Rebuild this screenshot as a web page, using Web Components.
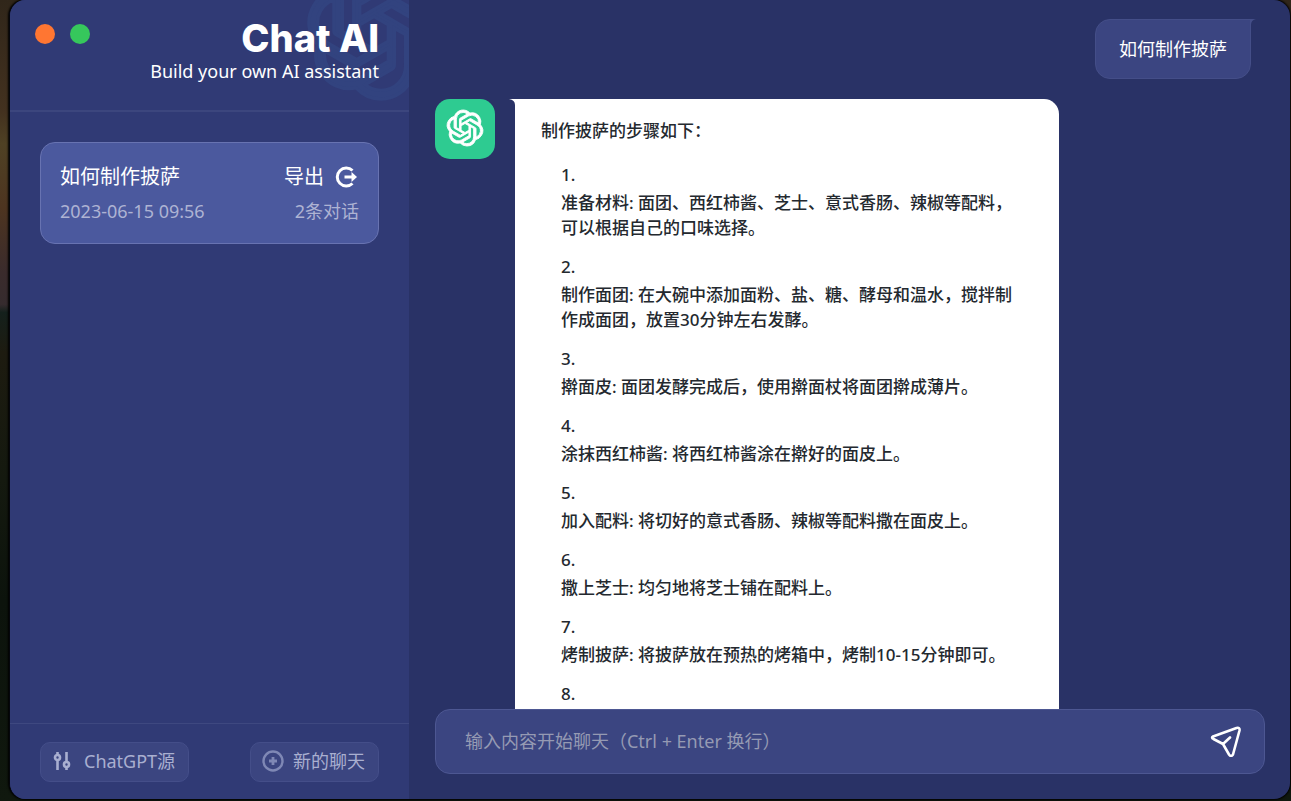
<!DOCTYPE html>
<html lang="zh-CN">
<head>
<meta charset="utf-8">
<title>Chat AI</title>
<style>
html, body { height: 100%; margin: 0; }
body {
  font-family: "Noto Sans", "Noto Sans CJK SC", sans-serif;
  color: #fff;
  overflow: hidden;
  background: linear-gradient(180deg, #30261a 0, #43311f 14%, #4f4124 18%, #4d3420 26%, #3a2b2c 34%, #352b2e 38%, #14201c 39%, #1d1b10 44%, #14190f 60%, #0c130c 75%, #10180e 100%);
}
</style>
</head>
<body>
<chat-window>
  <chat-sidebar slot="sidebar">
    <chat-session slot="sessions" when="2023-06-15 09:56" count="2条对话">如何制作披萨</chat-session>
    <tool-button slot="tools" icon="sliders">ChatGPT源</tool-button>
    <tool-button slot="tools" icon="plus">新的聊天</tool-button>
  </chat-sidebar>
  <user-message>如何制作披萨</user-message>
  <bot-message>
    <span>制作披萨的步骤如下：</span>
    <recipe-step slot="steps" n="1">准备材料: 面团、西红柿酱、芝士、意式香肠、辣椒等配料，可以根据自己的口味选择。</recipe-step>
    <recipe-step slot="steps" n="2">制作面团: 在大碗中添加面粉、盐、糖、酵母和温水，搅拌制作成面团，放置30分钟左右发酵。</recipe-step>
    <recipe-step slot="steps" n="3">擀面皮: 面团发酵完成后，使用擀面杖将面团擀成薄片。</recipe-step>
    <recipe-step slot="steps" n="4">涂抹西红柿酱: 将西红柿酱涂在擀好的面皮上。</recipe-step>
    <recipe-step slot="steps" n="5">加入配料: 将切好的意式香肠、辣椒等配料撒在面皮上。</recipe-step>
    <recipe-step slot="steps" n="6">撒上芝士: 均匀地将芝士铺在配料上。</recipe-step>
    <recipe-step slot="steps" n="7">烤制披萨: 将披萨放在预热的烤箱中，烤制10-15分钟即可。</recipe-step>
    <recipe-step slot="steps" n="8"></recipe-step>
  </bot-message>
  <chat-composer slot="composer"></chat-composer>
</chat-window>
<script>
const LOGO = '<path fill="currentColor" stroke="currentColor" stroke-width=".6" d="M22.2819 9.8211a5.9847 5.9847 0 0 0-.5157-4.9108 6.0462 6.0462 0 0 0-6.5098-2.9A6.0651 6.0651 0 0 0 4.9807 4.1818a5.9847 5.9847 0 0 0-3.9977 2.9 6.0462 6.0462 0 0 0 .7427 7.0966 5.98 5.98 0 0 0 .511 4.9107 6.051 6.051 0 0 0 6.5146 2.9001A5.9847 5.9847 0 0 0 13.2599 24a6.0557 6.0557 0 0 0 5.7718-4.2058 5.9894 5.9894 0 0 0 3.9977-2.9001 6.0557 6.0557 0 0 0-.7475-7.0729zm-9.022 12.6081a4.4755 4.4755 0 0 1-2.8764-1.0408l.1419-.0804 4.7783-2.7582a.7948.7948 0 0 0 .3927-.6813v-6.7369l2.02 1.1686a.071.071 0 0 1 .038.052v5.5826a4.504 4.504 0 0 1-4.4945 4.4944zm-9.6607-4.1254a4.4708 4.4708 0 0 1-.5346-3.0137l.142.0852 4.783 2.7582a.7712.7712 0 0 0 .7806 0l5.8428-3.3685v2.3324a.0804.0804 0 0 1-.0332.0615L9.74 19.9502a4.4992 4.4992 0 0 1-6.1408-1.6464zM2.3408 7.8956a4.485 4.485 0 0 1 2.3655-1.9728V11.6a.7664.7664 0 0 0 .3879.6765l5.8144 3.3543-2.0201 1.1685a.0757.0757 0 0 1-.071 0l-4.8303-2.7865A4.504 4.504 0 0 1 2.3408 7.872zm16.5963 3.8558L13.1038 8.364 15.1192 7.2a.0757.0757 0 0 1 .071 0l4.8303 2.7913a4.4944 4.4944 0 0 1-.6765 8.1042v-5.6772a.79.79 0 0 0-.407-.667zm2.0107-3.0231l-.142-.0852-4.7735-2.7818a.7759.7759 0 0 0-.7854 0L9.409 9.2297V6.8974a.0662.0662 0 0 1 .0284-.0615l4.8303-2.7866a4.4992 4.4992 0 0 1 6.6802 4.66zM8.3065 12.863l-2.02-1.1638a.0804.0804 0 0 1-.038-.0567V6.0742a4.4992 4.4992 0 0 1 7.3757-3.4537l-.142.0805L8.704 5.459a.7948.7948 0 0 0-.3927.6813zm1.0976-2.3654l2.602-1.4998 2.6069 1.4998v2.9994l-2.5974 1.4997-2.6067-1.4997Z"/>';

const define = (name, html, setup) => {
  const t = document.createElement('template');
  t.innerHTML = '<style>*{box-sizing:border-box}</style>' + html;
  customElements.define(name, class extends HTMLElement {
    connectedCallback() {
      if (this.shadowRoot) return;
      const root = this.attachShadow({ mode: 'open' });
      root.append(t.content.cloneNode(true));
      if (setup) setup(this, root);
    }
  });
};

define('chat-window', `
<style>
:host { display: block; height: 100%; box-sizing: border-box; padding: 0 1px 2px 9px; }
.frame { display: flex; height: 100%; border-left: 1px solid #05060c; border-radius: 16px; overflow: hidden; background: #293266; box-shadow: 0 0 2px 1px #000; }
main { flex: 1; min-width: 0; display: flex; flex-direction: column; padding: 0 25px 0 26px; }
.log { flex: 1; min-height: 0; overflow: hidden; padding: 19px 14px 0 0; display: flex; flex-direction: column; gap: 20px; }
.foot { padding-bottom: 25px; }
</style>
<div class="frame">
  <slot name="sidebar"></slot>
  <main>
    <div class="log"><slot></slot></div>
    <div class="foot"><slot name="composer"></slot></div>
  </main>
</div>`);

define('chat-sidebar', `
<style>
:host { display: flex; flex-direction: column; width: 399px; flex: none; background: #303a75; }
header { position: relative; height: 112px; overflow: hidden; border-bottom: 2px solid #3c467e; display: flex; justify-content: space-between; padding: 18px 30px 0 25px; }
.logo { position: absolute; right: -31px; top: -33px; width: 132px; height: 132px; color: #32437f; overflow: visible; }
.dots { display: flex; gap: 15px; padding-top: 6px; }
.dots button { width: 20px; height: 20px; border: 0; padding: 0; border-radius: 50%; background: #ff7632; }
.dots button + button { background: #36c75c; }
.brand { position: relative; text-align: right; }
h1 { margin: 0; font: 800 38px/40px Inter, sans-serif; }
p { margin: 0; font-size: 18px; line-height: 26px; }
.list { flex: 1; padding: 30px; }
footer { height: 76px; border-top: 1px solid #3e4880; padding: 18px 30px 0; display: flex; justify-content: space-between; align-items: flex-start; }
</style>
<header>
  <svg class="logo" viewBox="0 0 24 24" aria-hidden="true">${LOGO}</svg>
  <div class="dots"><button aria-label="关闭"></button><button aria-label="最大化"></button></div>
  <div class="brand"><h1>Chat AI</h1><p>Build your own AI assistant</p></div>
</header>
<div class="list"><slot name="sessions"></slot></div>
<footer><slot name="tools"></slot></footer>`);

define('chat-session', `
<style>
:host { display: block; border: 1px solid #6873b1; border-radius: 15px; background: #4b599e; padding: 18px 19px 13px; }
.row { display: flex; justify-content: space-between; align-items: center; }
.title { font-size: 20px; line-height: 32px; }
button { display: flex; align-items: center; gap: 11px; border: 0; padding: 0; background: none; color: inherit; font: inherit; font-size: 20px; line-height: 32px; }
.meta { font-size: 18px; line-height: 37px; color: #aeb3d3; }
svg { width: 24px; height: 24px; }
</style>
<div class="row"><span class="title"><slot></slot></span>
<button>导出<svg viewBox="0 0 24 24" fill="none" stroke="#fff" stroke-width="3"><path d="M17.500 5.500A9 9 0 1 0 17.500 18.500M9.500 12H18"/><path d="M16.500 7 22 12 16.500 17Z" fill="#fff" stroke="none"/></svg></button></div>
<div class="row meta"><time></time><span class="count"></span></div>`, (el, root) => {
  root.querySelector('time').textContent = el.getAttribute('when');
  root.querySelector('.count').textContent = el.getAttribute('count');
});

const TOOL_ICONS = {
  sliders: '<svg width="20" height="20" viewBox="0 0 20 20" fill="none" stroke="currentColor" stroke-width="2.6"><path d="M5.500 1v3M5.500 9v10M14.500 1v10M14.500 16v3"/><circle cx="5.500" cy="6.500" r="2.500"/><circle cx="14.500" cy="13.500" r="2.500"/></svg>',
  plus: '<svg width="22" height="22" viewBox="0 0 22 22" fill="none" stroke="#7f88b5" stroke-width="2.4"><circle cx="11" cy="11" r="9.500"/><path d="M11 7v8M7 11h8" stroke-width="2.800"/></svg>'
};
define('tool-button', `
<style>
:host { display: block; }
button { display: flex; align-items: center; gap: 9px; height: 40px; padding: 0 13px 2px 11px; border: 1px solid #444e89; border-radius: 10px; background: #3b4580; color: #a9afd0; font: inherit; font-size: 18px; line-height: 24px; }
:host([icon="sliders"]) button { gap: 12px; }
.icon { display: flex; }
svg { flex: none; }
</style>
<button><span class="icon"></span><span><slot></slot></span></button>`, (el, root) => {
  root.querySelector('.icon').innerHTML = TOOL_ICONS[el.getAttribute('icon')];
});

define('user-message', `
<style>
:host { display: block; align-self: flex-end; position: relative; }
.bubble { height: 60px; padding: 0 23px; border: 1px solid #444e88; border-radius: 15px 0 15px 15px; background: #3b4581; font-size: 18px; line-height: 58px; }
.tail { position: absolute; left: 100%; top: 0; width: 6px; height: 6px; margin-left: -1px; }
</style>
<div class="bubble"><slot></slot></div>
<svg class="tail" viewBox="0 0 6 6" aria-hidden="true"><path d="M0 0H6Q1 1 1 6H0Z" fill="#444e88"/></svg>`);

define('bot-message', `
<style>
:host { display: flex; gap: 20px; align-items: flex-start; }
.avatar { flex: none; width: 60px; height: 60px; border-radius: 15px; background: #2ecb91; display: flex; align-items: flex-start; justify-content: center; padding-top: 11px; }
.avatar svg { width: 36px; height: 36px; overflow: visible; }
.bubble { position: relative; width: calc(200% / 3); background: #fff; color: #24292f; border-radius: 0 15px 15px 15px; padding: 19px 32px 19px 26px; font-size: 17px; line-height: 25px; font-weight: 500; }
.tail { position: absolute; right: 100%; top: 0; width: 6px; height: 6px; }
ol { list-style: none; margin: 19px 0 0; padding: 0 0 0 20px; display: flex; flex-direction: column; gap: 14px; }
</style>
<div class="avatar"><svg viewBox="0 0 24 24" aria-hidden="true">${LOGO}</svg></div>
<div class="bubble"><svg class="tail" viewBox="0 0 6 6" aria-hidden="true"><path d="M6 0H0Q6 1 6 6Z" fill="#fff"/></svg><slot></slot><ol role="list"><slot name="steps"></slot></ol></div>`);

define('recipe-step', `
<style>
:host { display: block; }
.n { margin-bottom: 3px; min-height: 25px; }
.text { min-height: 25px; }
</style>
<div class="n"></div><div class="text"><slot></slot></div>`, (el, root) => {
  el.setAttribute('role', 'listitem');
  root.querySelector('.n').textContent = el.getAttribute('n') + '.';
});

define('chat-composer', `
<style>
:host { display: block; }
form { display: flex; align-items: center; height: 65px; border: 1px solid #4d5792; border-radius: 15px; background: #3b4581; padding: 0 22px 2px 29px; }
input { flex: 1; min-width: 0; border: 0; outline: 0; padding: 0; background: none; color: #fff; font: inherit; font-size: 18px; }
input::placeholder { color: #959ab3; opacity: 1; }
button { border: 0; background: none; padding: 0; display: flex; }
</style>
<form><input type="text" aria-label="输入内容" placeholder="输入内容开始聊天（Ctrl + Enter 换行）">
<button type="button" aria-label="发送"><svg width="32" height="32" viewBox="0 0 32 32" fill="none" stroke="#fff" stroke-width="2.600" stroke-linejoin="round" stroke-linecap="round"><path d="M3 11.500 26.500 3Q30 2 29.500 5.500L23 29.500Q21 32.500 19 29.500L13 19 3.500 14Q1 12.500 3 11.500ZM13 19 20 12.500"/></svg></button></form>`);
</script>
</body>
</html>
